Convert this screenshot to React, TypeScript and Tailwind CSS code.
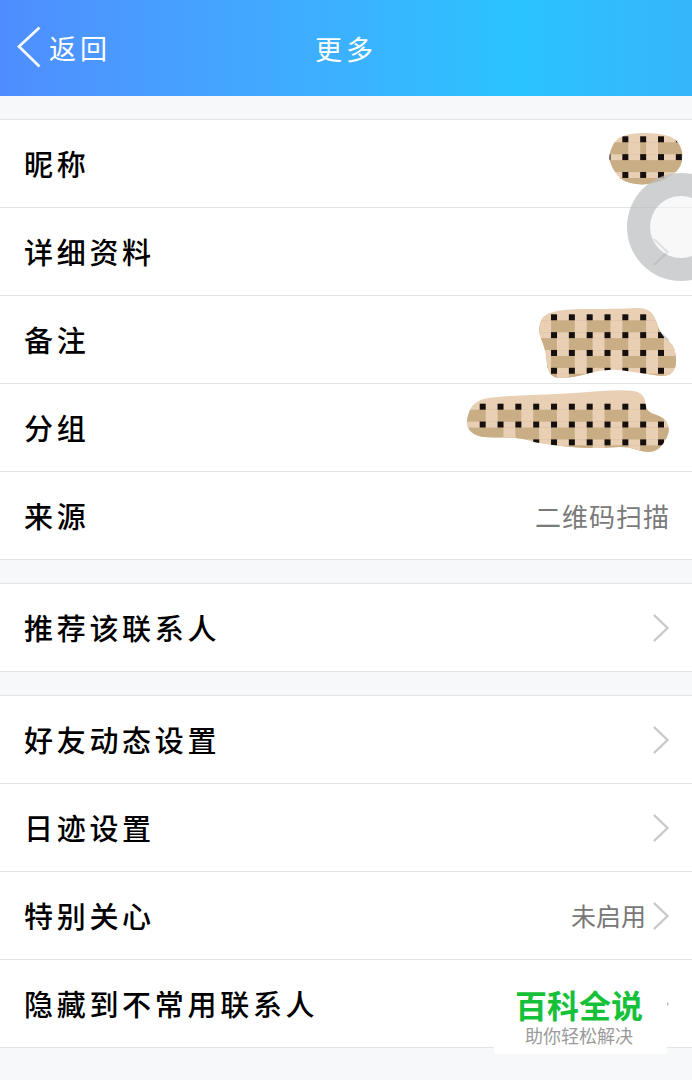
type Row = { label: string; value?: string; arrow?: boolean };
type Pt = [number, number];

const sections: Row[][] = [
  [
    { label: '昵称' },
    { label: '详细资料', arrow: true },
    { label: '备注', arrow: true },
    { label: '分组' },
    { label: '来源', value: '二维码扫描' },
  ],
  [{ label: '推荐该联系人', arrow: true }],
  [
    { label: '好友动态设置', arrow: true },
    { label: '日迹设置', arrow: true },
    { label: '特别关心', value: '未启用', arrow: true },
    { label: '隐藏到不常用联系人', arrow: true },
  ],
];

const STEP = 17.83;
const X0 = 482.7;

// rounded outline through the midpoints of the given points
function smooth(pts: Pt[]) {
  const mid = (a: Pt, b: Pt) => `${(a[0] + b[0]) / 2} ${(a[1] + b[1]) / 2}`;
  let d = `M${mid(pts[pts.length - 1], pts[0])}`;
  pts.forEach((p, i) => {
    d += ` Q${p[0]} ${p[1]} ${mid(p, pts[(i + 1) % pts.length])}`;
  });
  return d + 'Z';
}

function Mosaic({ id, pts, y0, rows, isLight }: { id: string; pts: Pt[]; y0: number; rows: number; isLight: (k: number, j: number) => boolean }) {
  const cols = Array.from({ length: 12 }, (_, k) => k);
  const rowList = Array.from({ length: rows }, (_, j) => j);
  const d = smooth(pts);
  return (
    <g>
      <clipPath id={id}>
        <path d={d} />
      </clipPath>
      <path d={d} fill="#e9cfb3" />
      <g clipPath={`url(#${id})`}>
        {rowList.map((j) => (
          <rect key={j} x={460} y={y0 + j * STEP + 3} width={232} height={12} fill="#c9ad85" />
        ))}
        {rowList.map((j) =>
          cols.map((k) =>
            isLight(k, j) ? <rect key={`${k}-${j}`} x={X0 + k * STEP + 2.9} y={y0 + j * STEP + 3} width={12} height={12} fill="#e9cfb3" /> : null,
          ),
        )}
        {rowList.map((j) =>
          cols.map((k) => (
            <rect key={`s${k}-${j}`} x={X0 + k * STEP - 3} y={y0 + j * STEP - 3} width={6} height={6} fill="#15100d" />
          )),
        )}
      </g>
    </g>
  );
}

function Chevron() {
  return (
    <svg width="18" height="30" viewBox="0 0 18 30" fill="none" className="shrink-0">
      <path d="M2 2l13.5 13L2 28" stroke="#c9c9c9" strokeWidth="2.4" />
    </svg>
  );
}

export default function App() {
  return (
    <div
      className="relative w-[692px] h-[1080px] overflow-hidden bg-[#f7f8fa]"
      style={{ fontFamily: '"Noto Sans CJK SC", "Noto Sans", sans-serif' }}
    >
      {/* Header */}
      <header className="relative h-[96px] flex items-center justify-center bg-gradient-to-r from-[#4f8dff] via-[#2ac3ff] via-75% to-[#36b5fb] text-white">
        <div className="absolute left-[17px] top-[26px] flex items-center gap-[8px]">
          <svg width="24" height="42" viewBox="0 0 24 42" fill="none">
            <path d="M22.5 1.5L2 20.5 22.5 40.5" stroke="#f3f8ff" strokeWidth="2.8" />
          </svg>
          <span className="text-[27px] leading-none tracking-[4px]">返回</span>
        </div>
        <span className="text-[27px] leading-none tracking-[4px]">更多</span>
      </header>

      {sections.map((rows, i) => (
        <section key={i} className="mt-[23px] bg-white border-t border-[#e3e4e6]">
          {rows.map((r) => (
            <div key={r.label} className="h-[88px] pl-[24px] pr-[22px] flex items-center justify-between border-b border-[#e3e4e6]">
              <span className="text-[29px] font-medium tracking-[3.7px] leading-none text-black">{r.label}</span>
              <div className="flex items-center gap-[6px]">
                {r.value && (
                  <span className={r.arrow ? 'text-[25px] text-[#777777]' : 'text-[26px] tracking-[1px] text-[#7a7a7a]'}>
                    {r.value}
                  </span>
                )}
                {r.arrow && <Chevron />}
              </div>
            </div>
          ))}
        </section>
      ))}

      {/* Mosaic over the private values */}
      <svg className="absolute left-0 top-0 pointer-events-none" width="692" height="1080" viewBox="0 0 692 1080">
        <Mosaic
          id="m1"
          y0={139.3}
          rows={3}
          isLight={(k, j) => j === 0 && (k === 8 || k === 9)}
          pts={[[608, 155], [619, 133], [670, 133], [684, 150], [680, 172], [650, 186], [622, 182], [612, 168]]}
        />
        <Mosaic
          id="m2"
          y0={317.3}
          rows={4}
          isLight={(k, j) => (k + j) % 2 === 1}
          pts={[[537, 330], [546, 309], [620, 309], [652, 307], [660, 335], [677, 348], [675, 378], [640, 373], [607, 368], [573, 378], [548, 378], [546, 350]]}
        />
        <Mosaic
          id="m3"
          y0={406.7}
          rows={3}
          isLight={(k, j) => (k + j) % 2 === 0}
          pts={[[466, 420], [474, 400], [503, 396], [560, 394], [630, 389], [645, 395], [646, 412], [664, 417], [671, 430], [660, 450], [645, 453], [627, 446], [593, 449], [540, 444], [517, 437], [480, 438], [468, 430]]}
        />
      </svg>

      {/* Floating assistive button */}
      <div className="absolute left-[627px] top-[173px] w-[108px] h-[108px] rounded-full border-[23px] border-[#6b7176]/30 bg-[#f4f4f4]/60" />

      {/* Watermark */}
      <div className="absolute left-[494px] top-[976px] w-[173px] h-[78px] bg-white flex flex-col items-center">
        <span className="text-[32px] font-bold leading-[34px] mt-[11px] -ml-[3px] text-[#16c13a]">百科全说</span>
        <span className="text-[18px] leading-[24px] mt-[2px] -ml-[3px] text-[#9a9a9a]">助你轻松解决</span>
      </div>
    </div>
  );
}
